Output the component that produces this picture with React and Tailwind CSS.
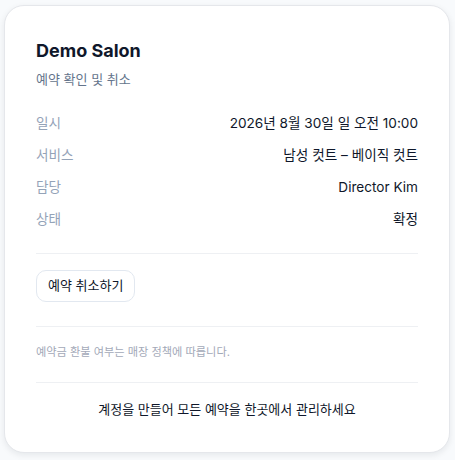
import React from 'react';

const rows = [
    { label: '일시', value: '2026년 8월 30일 일 오전 10:00' },
    { label: '서비스', value: '남성 컷트 – 베이직 컷트' },
    { label: '담당', value: 'Director Kim' },
    { label: '상태', value: '확정' },
];

const App = () => {
    return (
        <div
            className="min-h-screen bg-[#f8fafc] pt-[5px] pl-[4px] pr-[5px]"
            style={{ fontFamily: 'Inter, "Noto Sans CJK KR", sans-serif' }}
        >
            <div className="h-[448px] bg-white border border-[#e5e7eb] rounded-[20px] shadow-[0_2px_6px_rgba(15,23,42,0.08)] px-[31px] pt-[33px]">
                {/* Header */}
                <h1 className="text-[18px] leading-6 font-bold text-[#0f172a]">Demo Salon</h1>
                <p className="mt-[6px] text-[13px] leading-5 text-[#64748b]">예약 확인 및 취소</p>

                {/* Details */}
                <div className="mt-[24px] flex flex-col gap-[12px]">
                    {rows.map((r) => (
                        <div key={r.label} className="flex items-center justify-between h-5 text-[13.6px]">
                            <span className="text-[#94a3b8]">{r.label}</span>
                            <span className="text-[#0f172a]">{r.value}</span>
                        </div>
                    ))}
                </div>

                <div className="mt-[24px] border-t border-[#eef0f3]" />

                {/* Cancel */}
                <div className="pt-[16px] pb-[24px]">
                    <button className="h-[32px] px-[11px] rounded-[10px] border border-[#e2e8f0] bg-white text-[13px] text-[#0f172a]">
                        예약 취소하기
                    </button>
                </div>

                <div className="border-t border-[#eef0f3]" />

                <p className="pt-[17px] pb-[22px] text-[11.2px] leading-4 text-[#a3a9b8]">
                    예약금 환불 여부는 매장 정책에 따릅니다.
                </p>

                <div className="border-t border-[#eef0f3]" />

                <p className="pt-[16px] text-center text-[13px] leading-5 text-[#0f172a]">
                    계정을 만들어 모든 예약을 한곳에서 관리하세요
                </p>
            </div>
        </div>
    );
};

export default App;
